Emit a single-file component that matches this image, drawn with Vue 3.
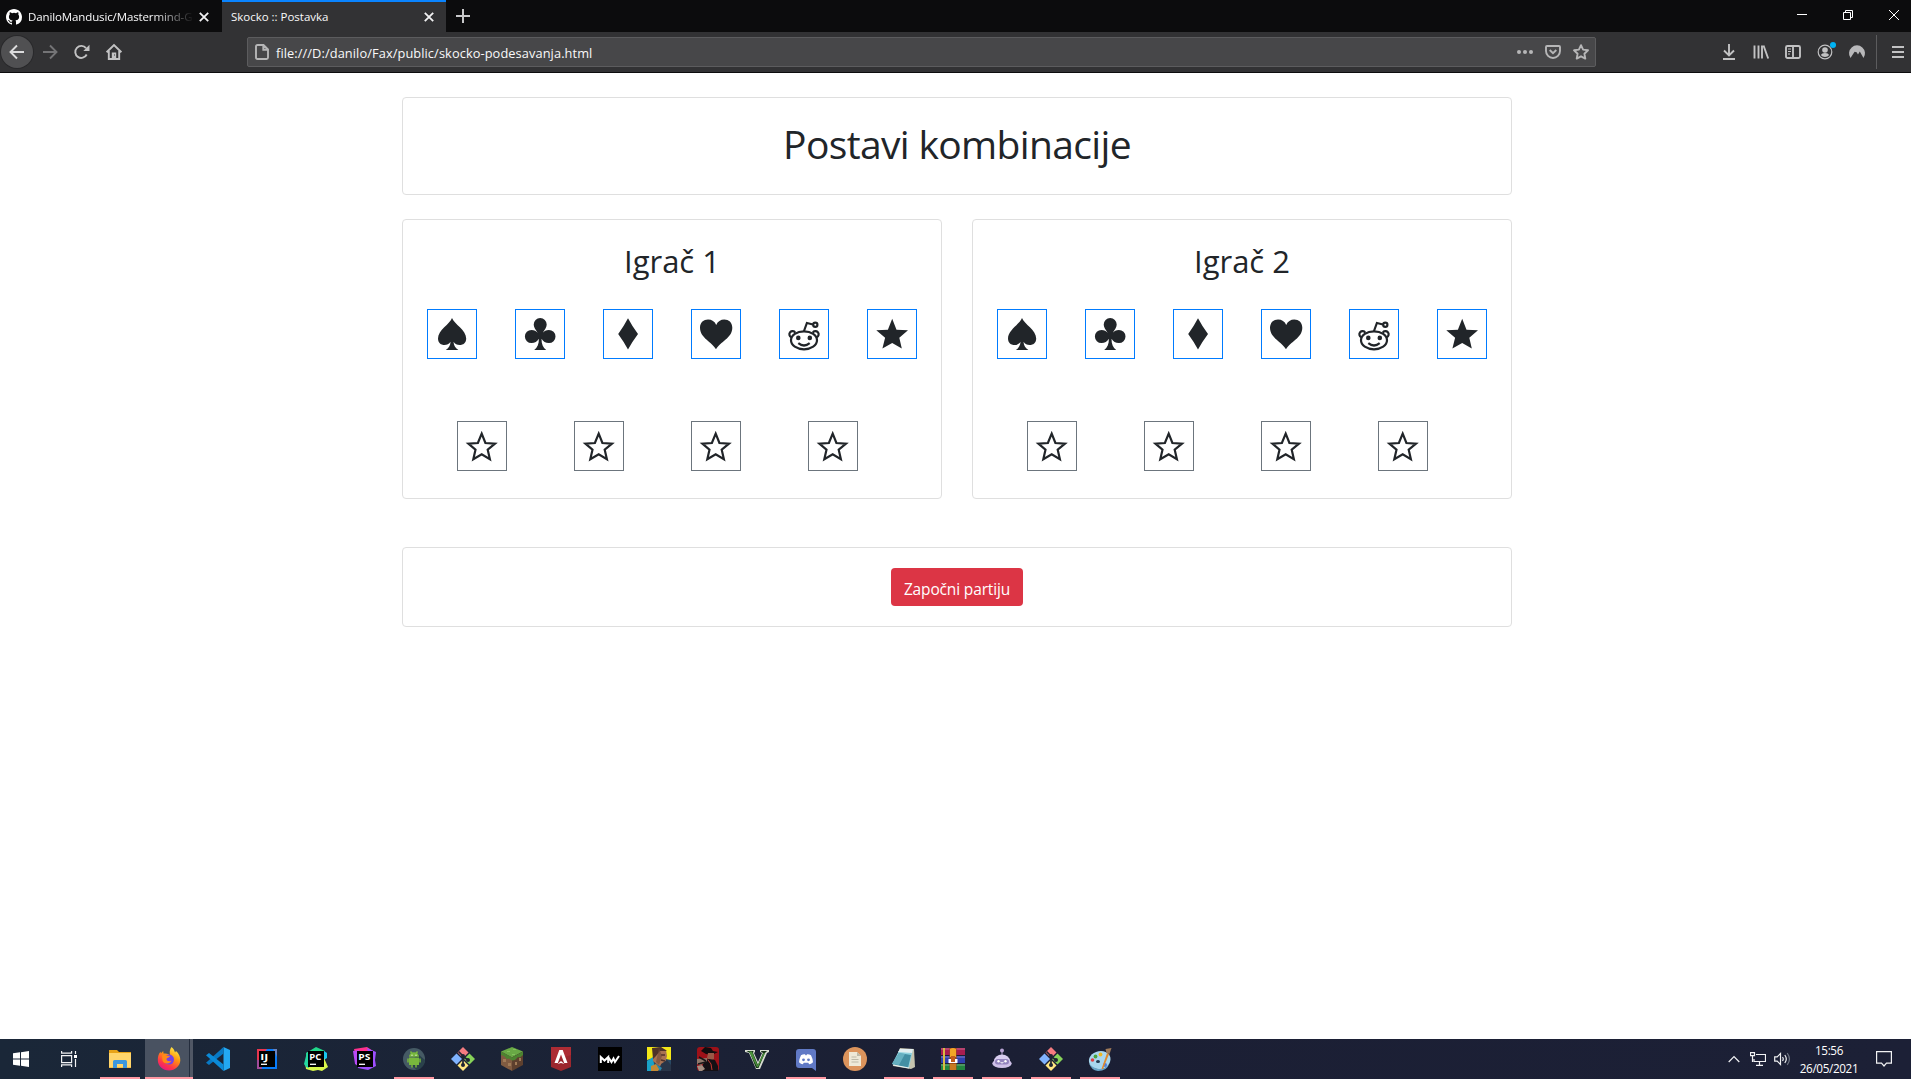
<script setup>
const symbols = {
  spade: '<path d="M25 9C23 15 11 21 11 29.5C11 34 14.3 36 17.3 36C20 36 22 35 23.6 32.8C23.3 36.5 21.5 39.6 18.8 41H31.4C28.6 39.6 26.8 36.5 26.5 32.8C28 35 30 36 32.8 36C36 36 39.2 34 39.2 29.5C39.2 21 27.2 15 25 9Z"/>',
  club: '<path d="M25.200 9a6.500 6.500 0 0 1 6.500 6.600c0 2.900-1.800 5.300-4 8.200 1.300-1.700 3.500-2.900 6.200-2.900a6.500 6.500 0 1 1 0 13.200c-3.300 0-5.800-1.700-7.400-4.300 0 5.200 1.500 9.200 4.700 11.200H19.200c3.200-2 4.700-6 4.700-11.200-1.600 2.600-4.100 4.300-7.400 4.300a6.500 6.500 0 1 1 0-13.200c2.700 0 4.900 1.200 6.200 2.900-2.200-2.900-4-5.300-4-8.200A6.500 6.500 0 0 1 25.200 9Z"/>',
  diamond: '<path d="M25 9.300Q29 17 35 25Q29 33 25 40.500Q21 33 15.200 25Q21 17 25 9.300Z"/>',
  heart: '<path d="M25 40.300C21 33 9 29 9 18.800C9 13.500 12.800 10.600 17 10.600C20.800 10.600 23.800 12.500 25.200 16C26.700 12.500 29.700 10.600 33.300 10.600C37.700 10.600 41.300 13.500 41.300 18.800C41.300 29 29 33 25 40.300Z"/>',
  reddit: '<g fill="none" stroke="#212529" stroke-width="2.200"><path d="M12.300 28.300A3.200 3.200 0 1 1 16.300 23.700M33.700 23.700A3.200 3.200 0 1 1 37.700 28.300M25 22L27.900 14L34 15.500"/><circle cx="36.300" cy="15.700" r="2.100"/><ellipse cx="25" cy="31.300" rx="13" ry="9"/><path d="M19.300 34.200Q25 38.800 30.700 34.200"/></g><circle cx="19.300" cy="28.900" r="2.300"/><circle cx="30.800" cy="28.900" r="2.300"/>',
  star: '<path d="M25.200 9.800L29.500 20.700L41 21.300L32.300 28.700L34.800 39.600L25.200 34L15.400 39.600L18.100 28.700L9.300 21.300L20.900 20.700Z"/>',
  empty: '<path d="M24.700 12.700L28.400 22L38 22.600L30.700 28.700L32.900 38.300L24.700 33.400L16.300 38.300L18.500 28.700L11.400 22.600L20.900 22Z" fill="none" stroke="#212529" stroke-width="2.200"/>',
}
const palette = ['spade', 'club', 'diamond', 'heart', 'reddit', 'star']
const players = ['Igrač 1', 'Igrač 2']

const git = '<path d="M12 0l5.500 5.500-5.500 5.500-5.500-5.500z" fill="#f47c80"/><path d="M5.500 6.500L11 12l-5.500 5.500L0 12z" fill="#80b3ff"/><path d="M18.500 6.500L24 12l-5.500 5.500L13 12z" fill="#87d359"/><path d="M12 13l5.500 5.500L12 24l-5.500-5.500z" fill="#ffe680"/><path d="M7.500 4.500L12 9v9M12 9.500l5 3.500" stroke="#1e2433" stroke-width="1.700" fill="none"/><circle cx="12" cy="9" r="2" fill="#1e2433"/><circle cx="12" cy="18" r="2" fill="#1e2433"/><circle cx="17" cy="13" r="2" fill="#1e2433"/>'
const jet = (t) => `<rect x="4" y="4" width="16" height="16" fill="#000"/><text x="5.300" y="12.500" textLength="${t === 'IJ' ? 8 : 12}" lengthAdjust="spacingAndGlyphs" font-family="Open Sans, sans-serif" font-size="9" font-weight="700" fill="#fff">${t}</text><path d="M6 17.300h6" stroke="#fff" stroke-width="1.300"/>`

const apps = [
  { name: 'files', open: true, svg: '<path d="M1 3h8l2 2h12v16H1z" fill="#e8a317"/><path d="M1 6h22v14.500H1z" fill="#ffd56b"/><path d="M5 21v-6.500q0-1.500 1.500-1.500h11q1.500 0 1.500 1.500V21h-4v-4H9v4z" fill="#3b97dd"/>' },
  { name: 'firefox', open: true, active: true, svg: '<defs><linearGradient id="ff" x1=".8" y1="0" x2=".25" y2="1"><stop offset="0" stop-color="#fff44f"/><stop offset=".4" stop-color="#ff980e"/><stop offset=".75" stop-color="#ff3647"/><stop offset="1" stop-color="#e31587"/></linearGradient></defs><path d="M14.500 0c2 1.500 3 3.500 3.500 5.500l1-1.500c3 2.500 4.500 6 4.300 9.500C23 19 18 23.500 12 23.500S.8 19 .8 13C.8 10 1.500 7 3.500 4.800L4 6.500C4.500 5.500 5.500 4.700 6.300 4.300L6.500 6.600C9 6 12 7 13 8.500 12.500 5 12.500 2.500 14.500 0z" fill="url(#ff)"/><circle cx="12" cy="12.600" r="5" fill="#7542e5"/><path d="M5 8.500c3-1 4 .2 6 .2l2 .3c-1 2-3.500 1.500-3.500 3.300 0 2 3.500 2.500 5 1.200-1 4-8 4-9 0z" fill="#ff8a16"/>' },
  { name: 'code', svg: '<path d="M17.500 0L24 3v18l-6.500 3z" fill="#23a8f2"/><path d="M17.500 0v6.500L3 18 0 15.700z" fill="#0879c4"/><path d="M0 8.300L3 6l14.500 11.500V24z" fill="#0b8ad8"/>' },
  { name: 'idea', svg: '<path d="M2 2h12L3 18H2z" fill="#fe315d"/><path d="M12 2h10v20H2v-8z" fill="#087cfa"/><path d="M2 7l5 1v14H2z" fill="#a24b9b"/><path d="M2 2h9L4 13H2z" fill="#e8364f"/><path d="M18 2h4v8z" fill="#6a82bd"/>' + jet('IJ') },
  { name: 'pycharm', svg: '<path d="M2 6l10-6 9 4-8 8-5 11-5-1z" fill="#21d789"/><path d="M20 4l3 2v5l-3 2z" fill="#18c8ef"/><path d="M1 15l4-3 15-1 4 9-6 4-4-1-5 1-7-2z" fill="#d7f54a"/><path d="M0 17l3-12 3 1-1 15-3-1z" fill="#25d8a0"/>' + jet('PC') },
  { name: 'phpstorm', svg: '<path d="M1 2l13-2 6 4-8 8-8 1z" fill="#ff318c"/><path d="M14 1l9 4-1 8 1 6-8 4-10-2-1-8 12-3z" fill="#9e4fff"/><path d="M0 4l6-1-1 16-3-2z" fill="#b74af7"/>' + jet('PS') },
  { name: 'android', open: true, svg: '<circle cx="12" cy="12" r="11" fill="#455a64"/><path d="M16 7l7 6a11 11 0 0 1-8 10l-8-6z" fill="#2a414b"/><path d="M7 10.500h10v7.500H7zM7 9.800a5 4.600 0 0 1 10 0z" fill="#78b83d"/><path d="M8.500 4.500l1.500 2M15.500 4.500L14 6.500M6 11.500v4M18 11.500v4M10 17.500v3M14 17.500v3" stroke="#78b83d" stroke-width="1.500"/><circle cx="10" cy="8.200" r=".6" fill="#fff"/><circle cx="14" cy="8.200" r=".6" fill="#fff"/>' },
  { name: 'git', svg: git },
  { name: 'blocks', svg: '<path d="M12 0l11 4.500-11 6-11-6z" fill="#69a945"/><path d="M1 4.500l11 6V24L1 18z" fill="#805b41"/><path d="M23 4.500l-11 6V24l11-6z" fill="#5e402e"/><path d="M1 4.500l11 6 11-6V8l-3 2.500-2-.5-3 3-3 .5-3-2-2 .5-3-3L1 8z" fill="#4c8430"/><path d="M3 12h3v3H3zM8 16h3v3H8zM15 15h2v3h-2zM19 11h2v3h-2z" fill="#a07a57"/><path d="M7 4h3v1H7zM13 2h3v1h-3zM12 7h3v1h-3z" fill="#82c25a"/>' },
  { name: 'apex', svg: '<path d="M2 0h20v20l-10 4-10-4z" fill="#9c272e"/><path d="M2 0h20v8L2 14z" fill="#ad2c34"/><path d="M10.300 3h3.400L18.500 16h-3.300L12 7.500 8.800 16H5.500z" fill="#fff"/><path d="M8.500 17l3.500-3 3.500 3-3.500-1z" fill="#fff"/>' },
  { name: 'mw', svg: '<path d="M0 0h24v24H0z" fill="#000"/><path d="M2.800 16V10l3.700 3.500 3.700-3.500V16M10.200 10l3.300 5 2-3.500 1.500 3.500 4-6" fill="none" stroke="#fff" stroke-width="2"/>' },
  { name: 'cyber', svg: '<path d="M0 0h24v24H0z" fill="#f4e818"/><path d="M0 13l9-3 15 3v11H0z" fill="#294963"/><path d="M0 14l6-4 2 14H0z" fill="#1aa2c8"/><path d="M6 2l7-2 6 3 1 6-2 8-6 2-6-5z" fill="#a97352"/><path d="M5 1l9-1 6 4-7 0-4 5-3 3z" fill="#4d3328"/><path d="M14 8h4M14 13l4 1" stroke="#4d3029" stroke-width="1.300"/><path d="M12 1l3 8-3 9-3-3z" fill="#6f4a38" opacity=".6"/><path d="M4 19l5-2 4 4-2 3H4z" fill="#c48a35"/><path d="M14 17l6-4 4 5v6H13z" fill="#293548"/><path d="M9 17l6 4-2 3z" fill="#2a87ad"/>' },
  { name: 'rdr', svg: '<rect x="1" width="22" height="24" rx="3" fill="#9e1118"/><path d="M5 4l4-4 6 1 2 3 5 1-6 3-6-1z" fill="#110c0e"/><path d="M12 6h6v6l-4 2-3-3z" fill="#9a5947"/><path d="M8 14l5-2 6 1 3 6v5H5z" fill="#141014"/><path d="M1 12l10-1v3l-6 4-4-1z" fill="#8d786b"/><path d="M3 10l7 4M2 17l8-2" stroke="#1a1516" stroke-width="1.500"/><path d="M1 19l5-1 3 4-3 2H3z" fill="#a58f82"/><path d="M12 13l3 4 1 6" stroke="#c23a30" fill="none"/>' },
  { name: 'gta', svg: '<path d="M0 3h10v2l-1 1 4 9 4-9-2-1V3h9v2l-2 1-7 16h-4L4 6 0 5z" fill="#d7ddd0"/><path d="M1.500 4h7L8 6l5 12 5-12-2-1.500V4h6l-2 2-6.500 15h-2.500L5 6z" fill="#173318"/><path d="M4 4.500h3l5.500 14L18.500 6h1.500l-7 14h-1z" fill="#4b953b"/>' },
  { name: 'discord', open: true, svg: '<path d="M5 2h14q3 0 3 3v19l-4-3H5q-3 0-3-3V5q0-3 3-3z" fill="#6079c5"/><path d="M7 8.200q2-1.200 4-1l.5 1h1l.5-1q2-.2 4 1 2 4 2 7-2 2-3.800 2l-1-1.500h-4.400l-1 1.500q-1.800 0-3.800-2 0-3 2-7z" fill="#fff"/><circle cx="9.500" cy="12.800" r="1.400" fill="#6079c5"/><circle cx="14.500" cy="12.800" r="1.400" fill="#6079c5"/>' },
  { name: 'doc', svg: '<circle cx="12" cy="12" r="12" fill="#dc945c"/><path d="M6 5h8l4 4v10H6z" fill="#eee9d7"/><path d="M14 5l4 4h-4z" fill="#bdb9a7"/><path d="M8.500 10h5M8.500 12.500h7M8.500 15h7" stroke="#bdb9a7"/>' },
  { name: 'notepad', open: true, svg: '<path d="M8 1l14 1 1 18-4 2L1 19z" fill="#c6c4af"/><path d="M8 2h13l-4 19L0 17z" fill="#8fd2df"/><path d="M7 6l12 2-3 13L0 17z" fill="#438fa4"/><path d="M8 2h13l-1 4L6 5z" fill="#e3eef0"/><path d="M7 6l6 1-6 11-7-1z" fill="#75bdcd" opacity=".7"/><path d="M1 18l16 3" stroke="#e9f2f3" stroke-width="1.200"/>' },
  { name: 'rar', open: true, svg: '<path d="M0 1h24v7H0z" fill="#a81d50"/><path d="M0 9h24v7H0z" fill="#303fae"/><path d="M0 17h24v6H0z" fill="#238640"/><path d="M0 2h24M0 10h24M0 18h24" stroke="#efd3df" stroke-width=".7" opacity=".6"/><path d="M3 1v22" stroke="#d8bb42" stroke-width="2"/><path d="M8.500 1h7v22h-7z" fill="#9a4d1c"/><path d="M9 2q3-2 6 0v8H9z" fill="#f2a526"/><path d="M7.500 12h9v4h-9z" fill="#fff"/><path d="M10 9h4v6h-4z" fill="#c35c1b"/><path d="M9 17h6v6H9z" fill="#c97a22"/>' },
  { name: 'robot', open: true, svg: '<path d="M12 4v6" stroke="#b5a3cd" stroke-width="1"/><circle cx="12" cy="3.500" r="2" fill="#b9a5d6"/><path d="M4 14a8 6.500 0 0 1 16 0v4H4z" fill="#d9cdf0"/><ellipse cx="12" cy="16.500" rx="9.700" ry="4.500" fill="#cfc1e8"/><rect x="5" y="12" width="14" height="5.500" rx="2.700" fill="#9384bd"/><circle cx="8.500" cy="14.300" r="1.200" fill="#fff"/><circle cx="15.500" cy="14.300" r="1.200" fill="#fff"/><path d="M10.500 15.300q1.500 1.500 3 0" stroke="#fff" fill="none"/>' },
  { name: 'git2', open: true, svg: git },
  { name: 'paint', open: true, svg: '<path d="M1 15C0 9 6 4 13 4s11 5 9 11-8 8-13 7-7-3-8-7z" fill="#a9d7ef"/><path d="M1 16q3 5 10 6 7 0 10-5-2 7-11 7-7-1-9-8z" fill="#6aa5c8"/><ellipse cx="10" cy="14.500" rx="2" ry="1.500" fill="#203850"/><circle cx="4.500" cy="13" r="1.800" fill="#df4144"/><circle cx="7.500" cy="9.500" r="1.900" fill="#49a43d"/><circle cx="12.500" cy="7.500" r="1.900" fill="#efb824"/><circle cx="17" cy="18" r="2" fill="#4d7edc"/><path d="M13.500 22L19 6l2 1-6 15z" fill="#e18a2c"/><path d="M17.500 2l6-1-2 6-3-1z" fill="#9e7958"/>' },
]
</script>

<template>
  <div class="screen">
    <header class="tabs">
      <div class="tab">
        <svg class="gh" width="16" height="16" viewBox="0 0 16 16" fill="#fff"><path d="M8 0C3.580 0 0 3.580 0 8c0 3.540 2.290 6.530 5.470 7.590.4.070.55-.17.55-.38 0-.19-.01-.82-.01-1.490-2.010.37-2.530-.49-2.690-.94-.09-.23-.48-.94-.82-1.130-.28-.15-.68-.52-.01-.53.63-.01 1.080.58 1.230.82.72 1.210 1.870.87 2.330.66.07-.52.28-.87.51-1.070-1.780-.2-3.640-.89-3.640-3.950 0-.87.31-1.590.82-2.150-.08-.2-.36-1.020.08-2.120 0 0 .67-.21 2.200.82a7.600 7.600 0 0 1 4 0c1.530-1.040 2.200-.82 2.200-.82.44 1.100.16 1.920.08 2.120.51.56.82 1.270.82 2.150 0 3.070-1.870 3.750-3.650 3.950.29.25.54.73.54 1.480 0 1.070-.01 1.930-.01 2.200 0 .21.15.46.55.38A8 8 0 0 0 16 8c0-4.420-3.580-8-8-8z"/></svg>
        <span class="title faded">DaniloMandusic/Mastermind-G</span>
        <svg class="x" width="10" height="10" viewBox="0 0 10 10"><path d="M.8.8l8.400 8.400M9.200.8L.8 9.200"/></svg>
      </div>
      <div class="tab active">
        <span class="title">Skocko :: Postavka</span>
        <svg class="x" width="10" height="10" viewBox="0 0 10 10"><path d="M.8.8l8.400 8.400M9.200.8L.8 9.200"/></svg>
      </div>
      <svg class="plus" width="14" height="14" viewBox="0 0 14 14"><path d="M7 0v14M0 7h14" stroke="#c8c8c9" stroke-width="2"/></svg>
      <div class="winctl">
        <svg width="46" height="32" viewBox="0 0 46 32"><path d="M18 14.500h10"/></svg>
        <svg width="46" height="32" viewBox="0 0 46 32"><path d="M18.500 12.500h7v7h-7zM20.500 12.500v-2h7v7h-2"/></svg>
        <svg width="46" height="32" viewBox="0 0 46 32"><path d="M18 10l10 10M28 10L18 20"/></svg>
      </div>
    </header>

    <nav class="toolbar">
      <div class="nav">
        <span class="back"><svg width="16" height="16" viewBox="0 0 16 16"><path d="M15 8H1.500M8 1.500L1.500 8 8 14.500" stroke="#dcdcdd"/></svg></span>
        <span><svg width="16" height="16" viewBox="0 0 16 16"><path d="M1 8h13.500M8 1.500L14.500 8 8 14.500" stroke="#747476"/></svg></span>
        <span><svg width="16" height="16" viewBox="0 0 16 16"><path d="M12.700 10.500A6 6 0 1 1 12 4.200"/><path d="M15.500.8V7H9.300z" fill="#c2c2c3" stroke="none"/></svg></span>
        <span><svg width="16" height="16" viewBox="0 0 16 16"><path d="M.6 8.300L8 1l7.400 7.300M2.800 7v8h10.400V7"/><path d="M5.800 8.500h4.400V15H5.800z" fill="#c2c2c3" stroke="none"/><path d="M8 10.500h1v1H8z" fill="#323234" stroke="none"/></svg></span>
      </div>
      <div class="url">
        <svg width="14" height="16" viewBox="0 0 14 16"><path d="M2.500 1h6L13 5.500V13.500q0 1.500-1.500 1.500h-9Q1 15 1 13.500v-11Q1 1 2.500 1zM8.300 1v4.700H13"/></svg>
        <span class="address">file:///D:/danilo/Fax/public/skocko-podesavanja.html</span>
        <div class="actions">
          <svg width="16" height="16" viewBox="0 0 16 16"><g fill="#b6b6b7" stroke="none"><circle cx="2" cy="8" r="2"/><circle cx="8" cy="8" r="2"/><circle cx="14" cy="8" r="2"/></g></svg>
          <svg width="16" height="16" viewBox="0 0 16 16"><path d="M2 2h12q1 0 1 1v4a7 7 0 0 1-14 0V3q0-1 1-1zM4.700 6L8 9.200 11.300 6"/></svg>
          <svg width="16" height="16" viewBox="0 0 16 16"><path d="M8 1.200l2.100 4.400 4.900.7-3.600 3.400.9 4.900L8 12.300l-4.300 2.300.9-4.900L1 6.300l4.900-.7z" stroke-linejoin="round"/></svg>
        </div>
      </div>
      <div class="tools">
        <svg viewBox="0 0 16 16"><path d="M8 0v11M3 6.500l5 5 5-5M2 15h12"/></svg>
        <svg viewBox="0 0 16 16"><path d="M1.500 1.500v13M5.500 1.500v13M9 1.500v13M10.500 1.500l4.700 13"/></svg>
        <svg viewBox="0 0 16 16"><rect x="1" y="2" width="14" height="12" rx="1.500"/><path d="M8 2v12"/><path d="M3 5h3M3 7.500h3M3 10h2" stroke-width="1"/></svg>
        <svg viewBox="0 0 16 16" class="account"><circle cx="8" cy="8" r="6.800" stroke-width="1.200"/><circle cx="8" cy="6" r="2.800" fill="#c2c2c3" stroke="none"/><path d="M3.800 11q1-2 4.200-2t4.200 2q-1.500 2-4.200 2t-4.200-2z" fill="#c2c2c3" stroke="none"/><circle cx="16" cy="1" r="3" fill="#00b3f4" stroke="none"/></svg>
        <svg viewBox="0 0 16 16"><path d="M1.500 14A8 8 0 1 1 14.500 14L10.800 7.600 9 10.500 7.600 8.200 5.600 7.800z" fill="#b8b8ba" stroke="none"/></svg>
      </div>
      <i class="sep"></i>
      <svg class="menu" width="12" height="12" viewBox="0 0 12 12"><path d="M0 1h12M0 6h12M0 11h12"/></svg>
    </nav>

    <main>
      <section class="card heading"><h1>Postavi kombinacije</h1></section>
      <div class="players">
        <section v-for="player in players" :key="player" class="card player">
          <h2>{{ player }}</h2>
          <div class="choices">
            <svg v-for="s in palette" :key="s" class="cell" viewBox="1 1 48 48" v-html="symbols[s]"></svg>
          </div>
          <div class="slots">
            <svg v-for="n in 4" :key="n" class="cell" viewBox="1 1 48 48" v-html="symbols.empty"></svg>
          </div>
        </section>
      </div>
      <section class="card start"><button>Započni partiju</button></section>
    </main>

    <footer class="taskbar">
      <div class="sys"><svg width="16" height="16" viewBox="0 0 16 16" fill="#fff"><path d="M0 2.300l7-1v6.200H0zM8 1.200L16 0v7.500H8zM0 8.500h7v6.200l-7-1zM8 8.500h8V16l-8-1.200z"/></svg></div>
      <div class="sys"><svg width="16" height="16" viewBox="0 0 16 16" fill="none" stroke="#f1f2f4" stroke-width="1.200"><path d="M.6 4.600h10v7H.6zM.6 0v2.200h10V0M.6 16v-2.200h10V16M14.500 0v3M14.500 8v8"/><path d="M13 4h3v3h-3z" fill="#fff" stroke="none"/></svg></div>
      <div v-for="a in apps" :key="a.name" class="app" :class="{ open: a.open, current: a.active }">
        <svg width="24" height="24" viewBox="0 0 24 24" v-html="a.svg"></svg>
      </div>
      <div class="tray">
        <svg width="12" height="8" viewBox="0 0 12 8"><path d="M.7 7L6 1.500 11.300 7"/></svg>
        <svg class="net" width="16" height="14" viewBox="0 0 16 14"><path d="M6 2.500h9.500v7H4V7M9.500 9.500v3.500M6 13.300h7M.5.700h4v3h-4zM2.500 3.700v6.300"/></svg>
        <svg class="vol" width="17" height="14" viewBox="0 0 17 14"><path d="M.7 4.800h2.500L6.500 1.500v11L3.200 9.200H.7zM8.500 5q1.500 2 0 4M10.800 3q3 4 0 8"/><path d="M13.200 1.200q4.500 5.800 0 11.600" stroke="#6d7482"/></svg>
        <div class="clock"><span>15:56</span><span>26/05/2021</span></div>
        <svg class="note" width="16" height="16" viewBox="0 0 16 16"><path d="M.6.6h14.800v11.500h-4.900L8 15l-2.500-2.900H.6z"/></svg>
      </div>
    </footer>
  </div>
</template>

<style>
body { margin: 0; overflow: hidden; }
</style>

<style scoped>
* { box-sizing: border-box; }
svg { display: block; flex: none; }
.screen { width: 1911px; height: 1079px; display: flex; flex-direction: column; background: #fff; font-family: "Open Sans", "Noto Sans", sans-serif; color: #212529; }
.tabs { height: 32px; background: #0c0c0d; display: flex; align-items: center; flex: none; }
.tab { width: 222px; height: 32px; display: flex; align-items: center; padding: 1px 13px 0 6px; color: #f9f9fa; }
.tab.active { width: 224px; background: #323234; border-top: 2px solid #0a84ff; padding: 0 12px 1px 9px; }
.tab.active .title { letter-spacing: -.02px; }
.title { flex: 1; margin-right: 7px; font-size: 11.500px; line-height: 20px; letter-spacing: -.12px; white-space: nowrap; overflow: hidden; }
.gh { margin-right: 6px; }
.faded { mask-image: linear-gradient(to right, #000 125px, transparent 166px); }
.x path { stroke: #f2f2f3; stroke-width: 1.800; }
.plus { margin-left: 10px; }
.winctl { margin-left: auto; display: flex; margin-right: -6px; }
.winctl path { stroke: #fff; fill: none; }
.toolbar { height: 41px; flex: none; background: #323234; border-bottom: 1px solid #0c0c0d; display: flex; align-items: center; }
.toolbar svg { fill: none; stroke: #c2c2c3; stroke-width: 1.900; overflow: visible; }
.nav { display: flex; width: 247px; padding-left: 1px; }
.nav span { width: 32px; height: 32px; display: grid; place-items: center; }
.nav .back { border-radius: 50%; background: #505052; box-shadow: 0 0 0 1px #29292b; margin-right: 1px; }
.url { width: 1349px; height: 30px; background: #474749; border: 1px solid #5c5c5e; border-radius: 2px; display: flex; align-items: center; padding: 0 6px 0 7px; }
.url svg { stroke: #b6b6b7; }
.address { margin: 2px 0 0 7px; font-size: 12.800px; line-height: 20px; letter-spacing: .09px; color: #f9f9fa; white-space: nowrap; }
.actions { margin-left: auto; display: flex; gap: 12px; }
.tools { display: flex; gap: 16px; margin-left: 125px; }
.tools svg { width: 16px; height: 16px; }
.sep { width: 1px; height: 34px; background: #5c5c5e; margin-left: 11px; }
.menu { margin-left: 15px; }
main { flex: 1; width: 1110px; margin-left: 402px; padding-top: 24px; }
.card { border: 1px solid #dfdfdf; border-radius: 4px; }
.heading { height: 98px; display: flex; justify-content: center; }
h1 { margin: 18px 0 0; font-size: 39px; line-height: 56px; font-weight: 400; letter-spacing: -.65px; }
.players { display: flex; gap: 30px; margin-top: 24px; }
.player { width: 540px; height: 280px; padding: 20px 24px; }
h2 { margin: 2px 0 29px; line-height: 38px; font-size: 31px; font-weight: 400; text-align: center; }
.choices { display: flex; gap: 38px; }
.slots { display: flex; gap: 67px; margin: 62px 0 0 30px; }
.cell { width: 50px; height: 50px; border: 1px solid #007bff; fill: #212529; }
.slots .cell { border-color: #6c757d; }
.start { height: 80px; margin-top: 48px; display: flex; justify-content: center; padding-top: 20px; }
button { width: 132px; height: 38px; padding: 3px 0 0; border: 0; border-radius: 4px; background: #dc3545; color: #fff; font: 400 15.500px/24px "Open Sans", "Noto Sans", sans-serif; letter-spacing: -.15px; white-space: nowrap; }
.taskbar { height: 40px; flex: none; display: flex; background: linear-gradient(to right, #1a2738, #1b1f34 50%, #1c2036); }
.sys { width: 48px; height: 40px; display: grid; place-items: center; }
.sys:first-child { width: 42px; }
.sys:nth-child(2) { width: 54px; }
.app { width: 48px; height: 40px; margin-right: 1px; display: grid; place-items: center; position: relative; }
.open::after { content: ""; position: absolute; left: 4px; right: 4px; bottom: 0; height: 2px; background: #ff98a2; }
.current { background: linear-gradient(to right, #495261 44px, #242d3d 44px, #242d3d 45px, #505765 45px); }
.current::after { left: 0; right: 0; }
.tray { display: flex; align-items: center; margin-left: auto; padding-right: 19px; }
.tray svg { fill: none; stroke: #f1f2f4; stroke-width: 1.200; }
.net { margin-left: 10px; }
.vol { margin-left: 8px; }
.clock { margin-left: 8px; width: 60px; display: flex; flex-direction: column; align-items: center; color: #fff; font-size: 11.700px; line-height: 18px; letter-spacing: -.35px; padding-bottom: 1px; }
.note { margin-left: 17px; }
</style>
